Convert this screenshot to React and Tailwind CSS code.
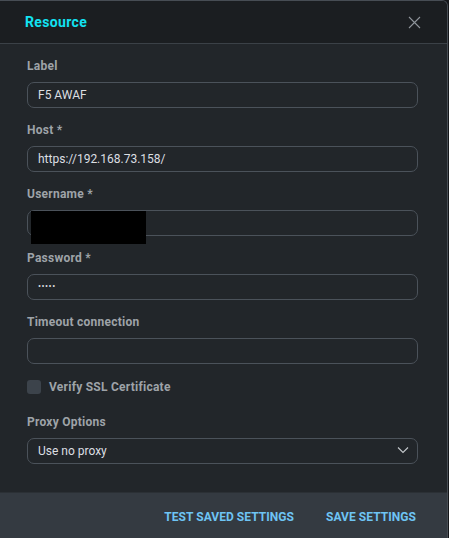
import React from 'react';

const fields = [
  { label: 'Label', value: 'F5 AWAF' },
  { label: 'Host *', value: 'https://192.168.73.158/' },
  { label: 'Username *', value: '', redacted: true },
  { label: 'Password *', value: '•••••', small: true },
  { label: 'Timeout connection', value: '' },
];

const Field = ({ label, value, redacted, small }) => (
  <div className="flex flex-col">
    <label className="h-[14px] leading-[14px] text-[12px] font-bold tracking-[0.25px] text-[#9ea3a8]">{label}</label>
    <div className="relative mt-[9px] h-[26px] rounded-[7px] border border-[#4b525a] bg-[#22262a] flex items-center px-[10px]">
      <span className={`${small ? 'text-[9px] tracking-[0.5px]' : 'text-[12px]'} text-[#dcdfe2]`}>{value}</span>
      {redacted && <div className="absolute left-[3px] top-0 w-[115px] h-[33px] bg-black" />}
    </div>
  </div>
);

export default function App() {
  return (
    <div className="w-[449px] h-[538px] bg-[#15171a] overflow-hidden" style={{ fontFamily: 'Roboto, "Liberation Sans", sans-serif' }}>
      <div className="w-[448px] h-[538px] flex flex-col border-t border-r border-[#474d54] rounded-tr-[6px] overflow-hidden bg-[#22262a]">
        {/* header */}
        <div className="h-[43px] shrink-0 flex items-center justify-between pl-[25px] pr-[26px] bg-[#1b1e21] border-b border-[#3b4147]">
          <h2 className="text-[14px] font-bold text-[#12e2f2] tracking-[0.35px]">Resource</h2>
          <svg width="13" height="13" viewBox="0 0 13 13" className="text-[#8e949a] mt-[1px]">
            <path d="M1 1L12 12M12 1L1 12" stroke="currentColor" strokeWidth="1.1" />
          </svg>
        </div>

        {/* body */}
        <div className="flex-1 flex flex-col pl-[27px] pr-[29px] pt-[15px]">
          <div className="flex flex-col gap-[15px]">
            {fields.map(f => <Field key={f.label} {...f} />)}
          </div>

          <div className="flex items-center mt-[16px] h-[14px]">
            <div className="w-[14px] h-[14px] rounded-[3px] bg-[#3c434b]" />
            <span className="ml-[8px] text-[12px] font-bold tracking-[0.25px] text-[#9ea3a8]">Verify SSL Certificate</span>
          </div>

          <div className="flex flex-col mt-[21px]">
            <label className="h-[14px] leading-[14px] text-[12px] font-bold tracking-[0.25px] text-[#9ea3a8]">Proxy Options</label>
            <div className="mt-[9px] h-[26px] rounded-[7px] border border-[#4b525a] flex items-center justify-between pl-[10px] pr-[8px]">
              <span className="text-[12px] text-[#dcdfe2]">Use no proxy</span>
              <svg width="12" height="8" viewBox="0 0 12 8" className="text-[#c4c8cc] -mt-[2px]">
                <path d="M1 1.5L6 6.5L11 1.5" stroke="currentColor" strokeWidth="1.1" fill="none" />
              </svg>
            </div>
          </div>
        </div>

        {/* footer */}
        <div className="h-[46px] shrink-0 flex items-center justify-end gap-[32px] pr-[31px] pt-[3px] bg-[#343a41] border-t border-[#2b3035]">
          <button className="text-[12px] font-bold text-[#6ec4f4] tracking-[0.05px]">TEST SAVED SETTINGS</button>
          <button className="text-[12px] font-bold text-[#6ec4f4] tracking-[0.05px]">SAVE SETTINGS</button>
        </div>
      </div>
    </div>
  );
}
